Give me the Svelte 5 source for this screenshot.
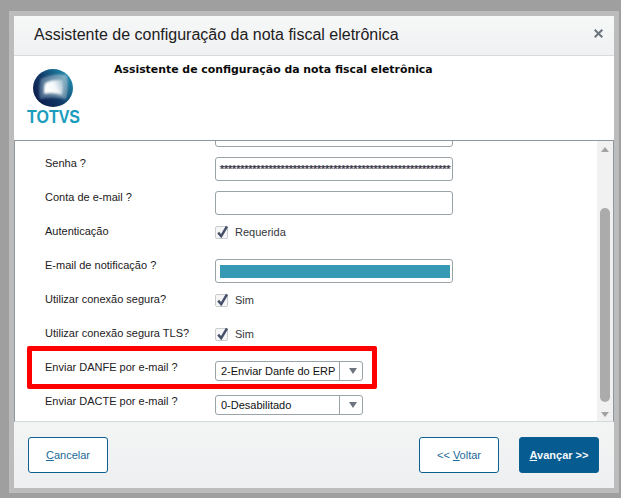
<script>
  const stars = "*".repeat(57);
</script>

<div class="page">
  <div class="frame">
    <div class="dialog">
      <header class="head">
        <h1>Assistente de configuração da nota fiscal eletrônica</h1>
        <svg class="close" width="9" height="9" viewBox="0 0 9 9">
          <path d="M0.7 0.7 L8.3 8.3 M8.3 0.7 L0.7 8.3" stroke="#6b747c" stroke-width="2" fill="none" />
        </svg>
      </header>

      <section class="banner">
        <svg class="logo" width="66" height="66" viewBox="0 0 66 66">
          <defs>
            <linearGradient id="globe" x1="0.1" y1="0.8" x2="0.9" y2="0.2">
              <stop offset="0" stop-color="#0d1f4d" />
              <stop offset="0.45" stop-color="#123a68" />
              <stop offset="1" stop-color="#1d86a8" />
            </linearGradient>
            <linearGradient id="shine" x1="0" y1="0.6" x2="1" y2="0.3">
              <stop offset="0" stop-color="#ffffff" />
              <stop offset="0.55" stop-color="#f6f9fa" />
              <stop offset="1" stop-color="#a9c4d2" />
            </linearGradient>
            <linearGradient id="halo" x1="0" y1="0.7" x2="1" y2="0.2">
              <stop offset="0" stop-color="#5f7f9e" />
              <stop offset="1" stop-color="#a8c3d3" />
            </linearGradient>
            <filter id="soft"><feGaussianBlur stdDeviation="0.8" /></filter>
          </defs>
          <ellipse cx="27" cy="23" rx="20" ry="19" fill="url(#globe)" />
          <path d="M15 14 Q26 8 41 10 Q43 22 40 34 Q26 31 14 34 Q12 24 15 14 Z" fill="url(#halo)" opacity="0.75" filter="url(#soft)" />
          <path d="M19 18 Q27 14 37 15 Q38 23 36 30 Q27 27 18 29 Q17 23 19 18 Z" fill="url(#shine)" filter="url(#soft)" />
          <text x="1" y="58" textLength="53" lengthAdjust="spacingAndGlyphs" class="brand">TOTVS</text>
        </svg>
        <h2>Assistente de configuração da nota fiscal eletrônica</h2>
      </section>

      <section class="panel">
        <div class="scroll">
          <div class="form">
            <div class="row"><span></span><div class="input"></div></div>
            <div class="row"><label>Senha ?</label><div class="input pass"><span>{stars}</span></div></div>
            <div class="row"><label>Conta de e-mail ?</label><div class="input"></div></div>
            <div class="row"><label>Autenticação</label>{@render check("Requerida")}</div>
            <div class="row"><label>E-mail de notificação ?</label><div class="input"><div class="mask"></div></div></div>
            <div class="row"><label>Utilizar conexão segura?</label>{@render check("Sim")}</div>
            <div class="row"><label>Utilizar conexão segura TLS?</label>{@render check("Sim")}</div>
            <div class="row"><label>Enviar DANFE por e-mail ?</label>{@render select("2-Enviar Danfe do ERP")}</div>
            <div class="row"><label>Enviar DACTE por e-mail ?</label>{@render select("0-Desabilitado")}</div>
          </div>
          <div class="highlight"></div>
        </div>
        <div class="bar">
          <div class="arrow up"></div>
          <div class="track"><div class="thumb"></div></div>
          <div class="arrow down"></div>
        </div>
      </section>

      <footer class="foot">
        <button class="btn"><u>C</u>ancelar</button>
        <div class="right">
          <button class="btn">&lt;&lt; <u>V</u>oltar</button>
          <button class="btn primary"><u>A</u>vançar &gt;&gt;</button>
        </div>
      </footer>
    </div>
  </div>
</div>

{#snippet check(text)}
  <div class="check">
    <span class="box">
      <svg width="14" height="15" viewBox="0 0 14 15">
        <path d="M3.2 7.6 L6.2 11.2 L12 1.4" stroke="#46506a" stroke-width="2.5" fill="none" />
      </svg>
    </span>
    <span class="check-text">{text}</span>
  </div>
{/snippet}

{#snippet select(text)}
  <div class="select">
    <span class="value">{text}</span>
    <span class="drop"><i></i></span>
  </div>
{/snippet}

<style>
  :global(body) { margin: 0; background: #9f9f9f; }
  .page { width: 621px; height: 498px; padding: 11px 2px 5px 9px; box-sizing: border-box; overflow: hidden; font-family: "Liberation Sans", Arial, sans-serif; }
  .frame { height: 482px; background: #bcbcbc; padding: 5px; box-sizing: border-box; }
  .dialog { height: 472px; background: #fff; display: flex; flex-direction: column; }

  .head { height: 40px; box-sizing: border-box; background: linear-gradient(#f6f7f7, #f0f1f2); border-bottom: 1px solid #d9dbdd; display: flex; align-items: center; justify-content: space-between; padding: 0 11px 2px 20px; flex: none; }
  h1 { margin: 0; font-size: 16px; font-weight: 400; color: #1d2022; line-height: 20px; }
  .close { display: block; margin-bottom: 2px; }

  .banner { height: 85px; flex: none; display: flex; border-bottom: 1px solid #8d979d; box-sizing: border-box; }
  .logo { padding: 9px 0 0 26px; flex: none; box-sizing: content-box; width: 66px; height: 66px; margin-left: -14px; margin-right: 2px; }
  .brand { font-family: "Liberation Sans", Arial, sans-serif; font-weight: 700; font-size: 18px; fill: #1a9dbd; }
  h2 { margin: 7px 0 0 20px; font-family: "DejaVu Sans", Verdana, sans-serif; font-size: 10.9px; line-height: 14px; font-weight: 700; color: #0a0a0a; }

  .panel { height: 281px; flex: none; display: flex; box-sizing: border-box; border-left: 1px solid #8d979d; border-right: 1px solid #8d979d; border-bottom: 1px solid #d6d9db; }
  .scroll { flex: 1; position: relative; overflow: hidden; }
  .form { margin-top: -18px; padding-left: 30px; }
  .row { height: 34px; display: flex; align-items: flex-start; }
  .row > label, .row > span { width: 170px; flex: none; font-size: 11px; line-height: 13px; color: #1d2022; }
  .input { width: 238px; height: 24px; box-sizing: border-box; border: 1px solid #9aa3a8; border-radius: 3px; background: #fff; padding: 5px 4px; }
  .pass { font-size: 11px; line-height: 12px; letter-spacing: -0.24px; color: #232347; overflow: hidden; white-space: nowrap; text-shadow: 1px 0 rgba(226, 140, 30, 0.7), -1px 0 rgba(30, 140, 220, 0.65); }
  .mask { height: 13px; margin-right: -2px; background: #379ab5; }

  .check { display: flex; align-items: flex-start; padding-top: 1px; }
  .box { width: 13px; height: 13px; box-sizing: border-box; border: 1px solid #c9cdd0; border-radius: 2px; background: #f6f6f7; position: relative; display: block; }
  .box svg { position: absolute; left: -1px; top: -2px; }
  .check-text { margin-left: 7px; font-size: 11px; line-height: 13px; color: #33373b; }

  .select { width: 148px; height: 20px; box-sizing: border-box; border: 1px solid #9aa3a8; border-radius: 3px; display: flex; background: #fff; }
  .value { flex: 1; min-width: 0; padding-left: 5px; font-size: 11px; line-height: 18px; color: #111; white-space: nowrap; overflow: hidden; }
  .drop { width: 23px; box-sizing: border-box; padding-left: 3px; border-left: 1px solid #9aa3a8; display: flex; align-items: center; justify-content: center; flex: none; }
  .drop i { width: 0; height: 0; border-left: 4px solid transparent; border-right: 4px solid transparent; border-top: 6px solid #6d7480; }

  .highlight { position: absolute; left: 12px; top: 205px; width: 350px; height: 43px; box-sizing: border-box; border: 5px solid #fe0000; border-radius: 2px; }

  .bar { width: 16px; flex: none; background: #f1f1f1; display: flex; flex-direction: column; align-items: center; }
  .arrow { width: 0; height: 0; border-left: 4px solid transparent; border-right: 4px solid transparent; flex: none; }
  .arrow.up { border-bottom: 5px solid #a3a3a3; margin-top: 6px; }
  .arrow.down { border-top: 5px solid #a3a3a3; margin: 3px 0 4px; }
  .track { flex: 1; width: 100%; padding-top: 56px; box-sizing: border-box; }
  .thumb { width: 10px; height: 194px; margin-left: 3px; background: #ababab; border-radius: 5px; }

  .foot { flex: 1; background: linear-gradient(#f3f4f4, #eeeff0); padding: 15px 15px 0 14px; display: flex; justify-content: space-between; align-items: flex-start; }
  .right { display: flex; gap: 20px; }
  .btn { width: 80px; height: 36px; box-sizing: border-box; border: 1px solid #0b6090; border-radius: 3px; background: #fff; color: #1b6a97; font-family: "Liberation Sans", Arial, sans-serif; font-size: 11px; padding: 0; }
  .primary { background: #065c90; color: #f4f7fa; font-weight: 700; }
</style>
